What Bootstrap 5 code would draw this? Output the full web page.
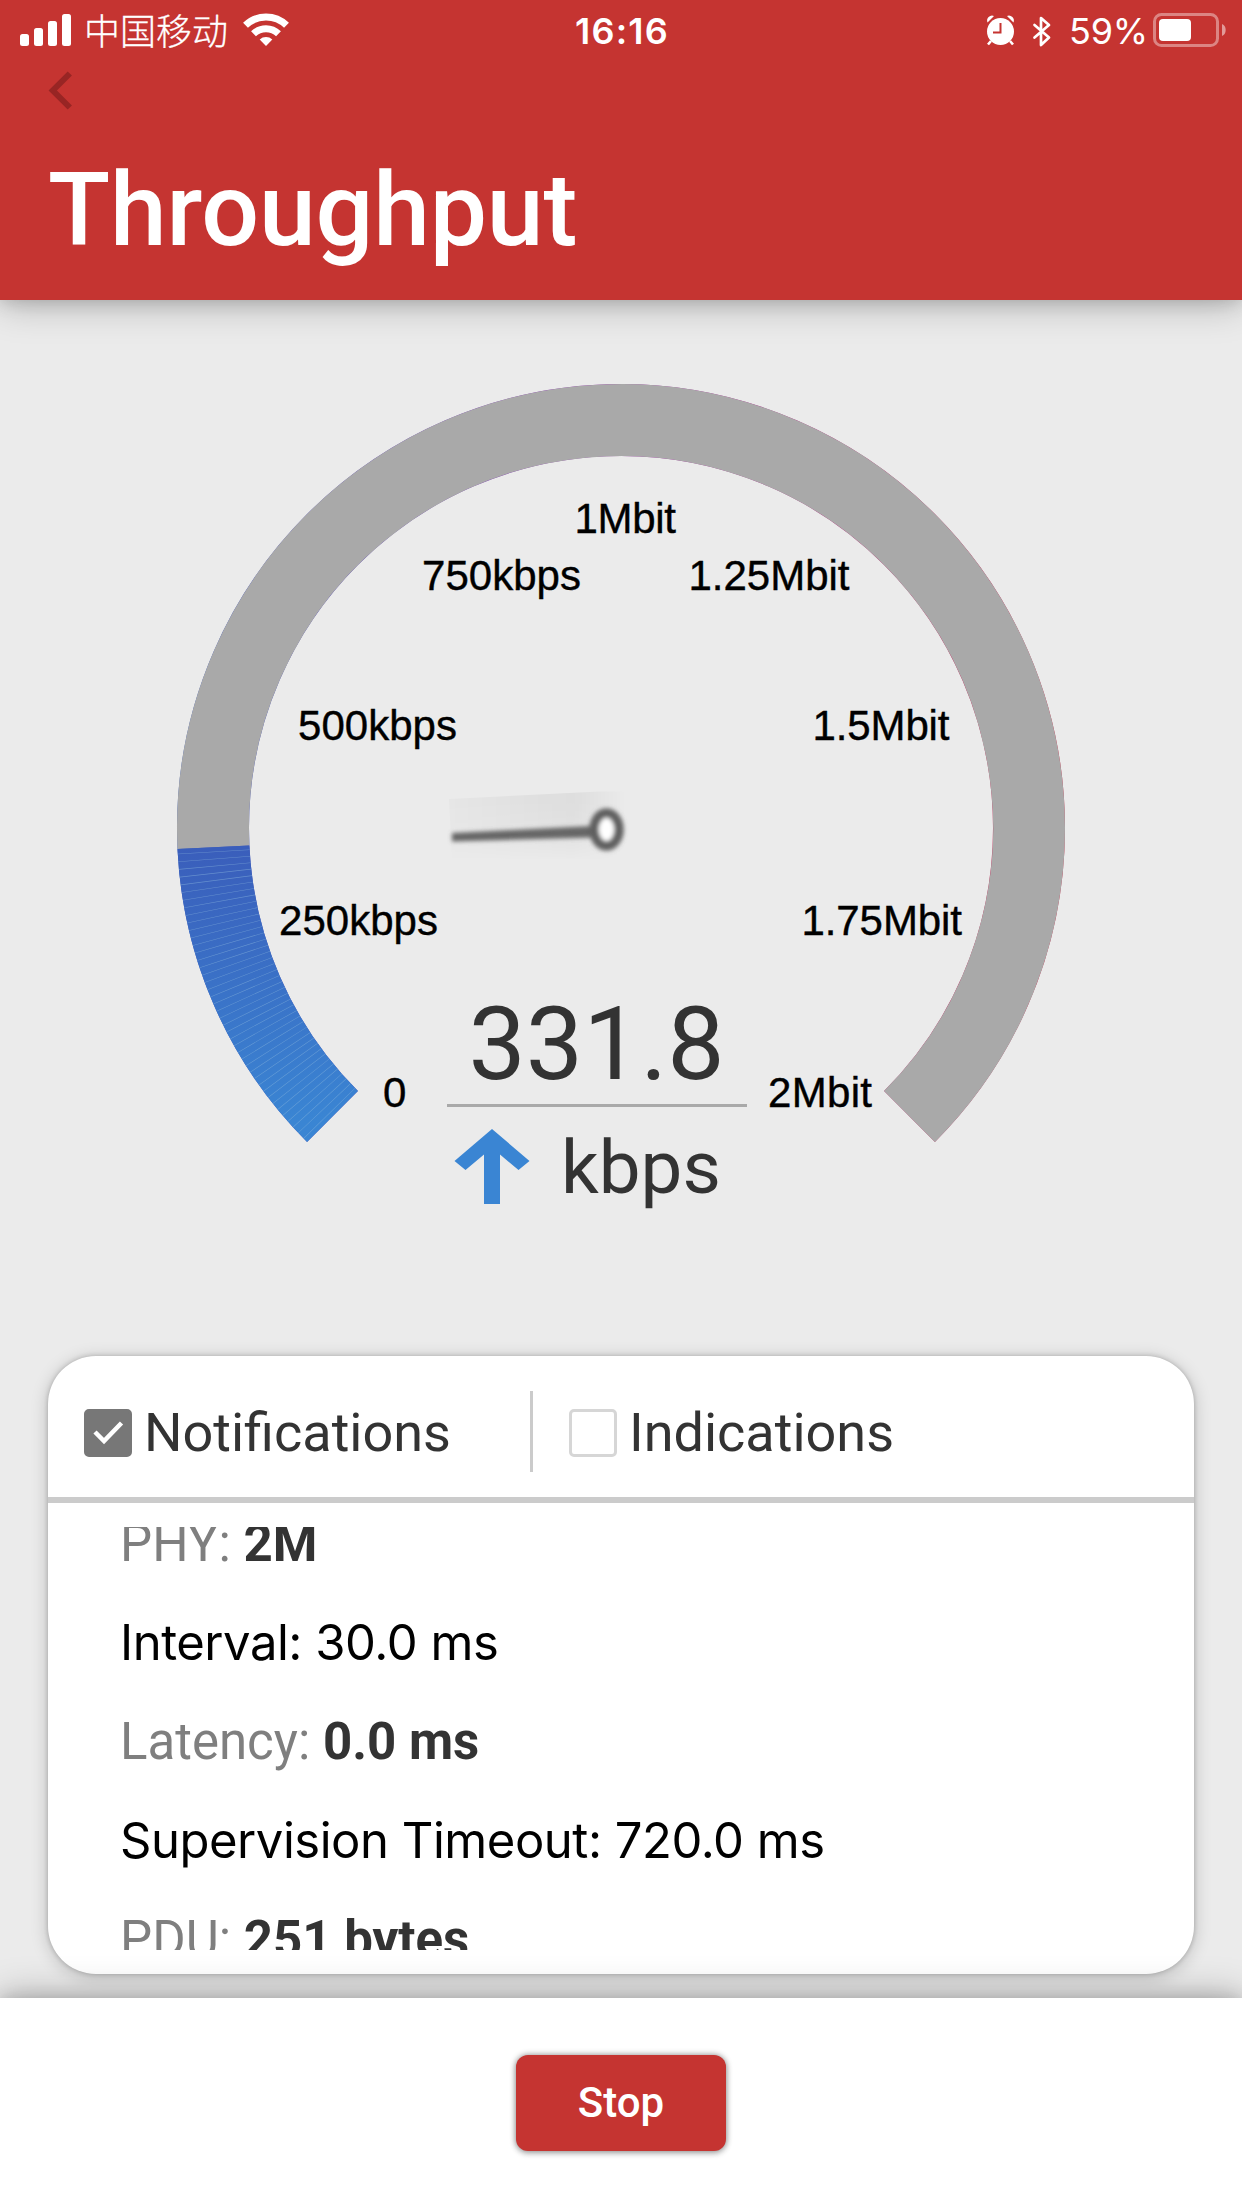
<!DOCTYPE html>
<html lang="zh-CN">
<head>
<meta charset="utf-8">
<meta name="viewport" content="width=device-width, initial-scale=1">
<title>Throughput</title>
<link href="https://cdn.jsdelivr.net/npm/bootstrap@5.3.0/dist/css/bootstrap.min.css" rel="stylesheet">
<style>
  body { background: #ebebeb; font-family: Roboto, "Noto Sans CJK SC", sans-serif; color: #333; }
  .screen { width: 1242px; height: 2208px; }
  .topbar { height: 300px; background: #c53431; z-index: 2;
    box-shadow: 0 0 18px rgba(0,0,0,.18), 0 5px 36px rgba(0,0,0,.24); }
  .statusbar { height: 62px; padding: 0 16px 0 20px; }
  .statusbar svg { display: block; }
  .carrier { font: 300 36px/59px "Noto Sans CJK SC", sans-serif; -webkit-text-stroke: .3px #fff; margin-left: 11px; width: 148px; white-space: nowrap; }
  .clock { font: 600 36px/62px Inter, sans-serif; letter-spacing: 1.2px; margin-right: 2px; }
  .percent { font: 400 36px/62px Inter, sans-serif; letter-spacing: -.2px; }
  .side { flex: 1 1 0; }
  .back { padding: 9px 0 0 48px; height: 90px; line-height: 0; }
  .title { font: 500 102px/120px Roboto, sans-serif; padding-left: 48px; letter-spacing: -.15px; margin-top: -2px; }
  .dial { height: 1056px; }
  .dial svg { display: block; }
  .tick { font: 42px "Liberation Sans", sans-serif; fill: #000; stroke: #000; stroke-width: .4px; }
  .reading { font: 102px Roboto, sans-serif; fill: #333; }
  .unit { font: 74.500px Roboto, sans-serif; fill: #333; }
  .panel { margin: 0 48px; height: 618px; border-radius: 48px; border: 0; background: #fff;
    box-shadow: 0 0 5px rgba(0,0,0,.22), 0 3px 18px rgba(0,0,0,.2); }
  .modes { height: 147px; border-bottom: 6px solid #cbcbcb; padding: 10px 0 0 36px; }
  .mode { font-size: 54px; line-height: 72px; gap: 12px; padding-top: 2px; }
  .mode .form-check-input { width: 48px; height: 48px; margin: 0; border: 3px solid #d6d6d6; border-radius: 5px; }
  .mode .form-check-input:checked { background: #777; border-color: #777; }
  .mode .box { width: 48px; height: 48px; position: relative; display: block; flex: none; }
  .mode .box svg { position: absolute; inset: 0; }
  .mode-first { width: 446px; }
  .rule { width: 3px; height: 81px; background: #cbcbcb; margin-right: 36px; }
  .params { margin: 24px 0 0 72px; height: 423px; overflow: hidden; }
  .params ul { margin: -33px 0 0; }
  .params li { height: 99px; line-height: 99px; font-size: 51px; color: #7f7f7f; white-space: nowrap; }
  .params li b { color: #333; font-weight: 700; }
  .params li.sys { font-family: Inter, sans-serif; font-size: 49px; letter-spacing: -.47px; color: #000; }
  .foot { margin-top: 24px; height: 210px; background: #fff; z-index: 2;
    box-shadow: 0 0 18px rgba(0,0,0,.18), 0 -3px 36px rgba(0,0,0,.24); }
  .foot .btn { width: 210px; height: 96px; margin-top: 57px; border: 0; border-radius: 12px; background: #c53431; color: #fff;
    font: 500 42px/96px Roboto, sans-serif; padding: 0;
    box-shadow: 0 0 6px rgba(0,0,0,.45), 0 3px 6px rgba(0,0,0,.15); }
</style>
</head>
<body>
<div class="screen d-flex flex-column overflow-hidden">
  <header class="topbar position-relative text-white flex-shrink-0">
    <div class="statusbar d-flex align-items-start">
      <div class="side d-flex">
        <svg width="53" height="62" fill="#fff"><rect x="0" y="34" width="9" height="12" rx="2.5"/><rect x="14" y="28" width="9" height="18" rx="2.5"/><rect x="28" y="21" width="9" height="25" rx="2.5"/><rect x="42" y="14" width="9" height="32" rx="2.5"/></svg>
        <span class="carrier">中国移动</span>
        <svg width="60" height="62" viewBox="232 0 60 62"><g fill="none" stroke="#fff" stroke-width="7"><path d="M245.500 25.300a29.500 29.500 0 0 1 41 0"/><path d="M253.500 33.800a18 18 0 0 1 25 0"/></g><path fill="#fff" d="M266 46l-6.300-6.500a9.500 9.500 0 0 1 12.600 0z"/></svg>
      </div>
      <div class="clock">16:16</div>
      <div class="side d-flex justify-content-end">
        <svg width="80" height="62" viewBox="980 0 80 62"><g fill="#fff"><ellipse cx="999.500" cy="31.500" rx="13.500" ry="13.500"/><path d="M986.500 22.500a5 5 0 0 1 6.500-6.500zM1012.500 22.500a5 5 0 0 0-6.500-6.500z"/></g><path d="M990 41l-3 3.500M1009 41l3 3.500" stroke="#fff" stroke-width="2.600"/><path d="M999.500 23v9.500h-7.500" fill="none" stroke="#c53431" stroke-width="2"/><path d="M1033.500 25l14.500 12.500-8 7.500V18l8 7-14.500 12.500" fill="none" stroke="#fff" stroke-width="2.700" stroke-linejoin="round" stroke-linecap="round"/></svg>
        <span class="percent ms-2">59%</span>
        <svg width="78" height="62" viewBox="1148 0 78 62"><rect x="1154.500" y="14.500" width="63" height="31" rx="7" fill="none" stroke="#fff" stroke-opacity=".4" stroke-width="3"/><rect x="1159" y="19" width="32" height="22" rx="4" fill="#fff"/><path d="M1222 24a6 6.500 0 0 1 0 12z" fill="#fff" fill-opacity=".5"/></svg>
      </div>
    </div>
    <div class="back"><svg width="25" height="40" viewBox="0 0 25 40"><path d="M21.800 2.500L4.800 19.500l17 17" fill="none" stroke="#982524" stroke-width="6"/></svg></div>
    <h1 class="title mb-0">Throughput</h1>
  </header>

  <section class="dial flex-shrink-0">
    <svg width="1242" height="1056" viewBox="0 300 1242 1056">
      <defs>
        <linearGradient id="speed" x1="0" y1="848" x2="0" y2="1120" gradientUnits="userSpaceOnUse"><stop offset="0" stop-color="#3a5ebb"/><stop offset="1" stop-color="#3a85d3"/></linearGradient>
        <linearGradient id="ring" x1="177" y1="0" x2="1065" y2="0" gradientUnits="userSpaceOnUse"><stop offset="0" stop-color="#3a5ebb"/><stop offset=".5" stop-color="#a03cb0"/><stop offset="1" stop-color="#c8304c"/></linearGradient>
        <linearGradient id="haze" x1="0" y1="0" x2="1" y2="0"><stop offset="0" stop-color="#000" stop-opacity=".02"/><stop offset=".7" stop-color="#000" stop-opacity=".055"/><stop offset="1" stop-color="#000" stop-opacity="0"/></linearGradient>
        <linearGradient id="fade" x1="0" y1="800" x2="0" y2="862" gradientUnits="userSpaceOnUse"><stop offset="0" stop-color="#fff"/><stop offset=".6" stop-color="#999"/><stop offset="1" stop-color="#000"/></linearGradient>
        <mask id="lower" maskUnits="userSpaceOnUse" x="440" y="780" width="200" height="90"><path fill="url(#fade)" d="M440 780h200v90H440z"/></mask>
        <filter id="soft" x="-20%" y="-60%" width="140%" height="220%"><feGaussianBlur stdDeviation="2"/></filter>
      </defs>
      <g fill="none" stroke-width="72">
        <path d="M332.500 1116.500A408 408 0 1 1 909.500 1116.500" stroke="url(#ring)"/>
        <path d="M213.450 847.220A408 408 0 1 1 909.500 1116.500" stroke="#a9a9a9"/>
        <path d="M332.500 1116.500A408 408 0 0 1 213.450 847.220" stroke="url(#speed)"/>
        <path d="M332.500 1116.500A408 408 0 0 1 213.450 847.220" pathLength="42.300" stroke="#8fbce0" stroke-opacity=".5" stroke-dasharray=".08 .92" stroke-dashoffset="-.6"/>
      </g>
      <g class="tick">
        <text x="574.500" y="533" textLength="101.500">1Mbit</text>
        <text x="422" y="590" textLength="159">750kbps</text>
        <text x="688.500" y="590" textLength="161">1.25Mbit</text>
        <text x="298" y="740" textLength="159">500kbps</text>
        <text x="812.500" y="740" textLength="137">1.5Mbit</text>
        <text x="279" y="934.500" textLength="159">250kbps</text>
        <text x="801.500" y="934.500" textLength="160.500">1.75Mbit</text>
        <text x="383" y="1106.500">0</text>
        <text x="768" y="1106.500" textLength="104">2Mbit</text>
      </g>
      <path d="M449 799L600 791.500H626L624 860 452 858z" fill="url(#haze)" mask="url(#lower)"/>
      <g filter="url(#soft)"><path d="M452 833l140-7v11.500l-140 4z" fill="#666"/><ellipse cx="606.500" cy="829.500" rx="12.500" ry="16.500" fill="#fff" stroke="#606060" stroke-width="9.500"/></g>
      <text class="reading" x="468.500" y="1079">331.8</text>
      <path d="M447 1104h300v3H447z" fill="#a9a9a9"/>
      <path d="M492 1129l37.500 32-11 9L500 1154.500V1204h-16v-49.500L465.500 1170l-11-9z" fill="#3a85d3"/>
      <text class="unit" x="561" y="1193">kbps</text>
    </svg>
  </section>

  <main class="panel card flex-shrink-0">
    <div class="modes d-flex align-items-center">
      <label class="mode mode-first d-flex align-items-center"><span class="box"><input class="form-check-input" type="checkbox" checked><svg width="48" height="48"><path d="M11 23l9 9 17.500-18" fill="none" stroke="#fff" stroke-width="4.500"/></svg></span><span>Notifications</span></label>
      <div class="rule"></div>
      <label class="mode d-flex align-items-center"><span class="box"><input class="form-check-input" type="checkbox"></span><span>Indications</span></label>
    </div>
    <div class="params">
      <ul class="list-unstyled">
        <li>PHY: <b>2M</b></li>
        <li class="sys">Interval: 30.0 ms</li>
        <li>Latency: <b>0.0 ms</b></li>
        <li class="sys">Supervision Timeout: 720.0 ms</li>
        <li>PDU: <b>251 bytes</b></li>
      </ul>
    </div>
  </main>

  <footer class="foot position-relative d-flex justify-content-center align-items-start flex-shrink-0">
    <button class="btn" type="button">Stop</button>
  </footer>
</div>
<script src="https://cdn.jsdelivr.net/npm/bootstrap@5.3.0/dist/js/bootstrap.bundle.min.js"></script>
</body>
</html>
